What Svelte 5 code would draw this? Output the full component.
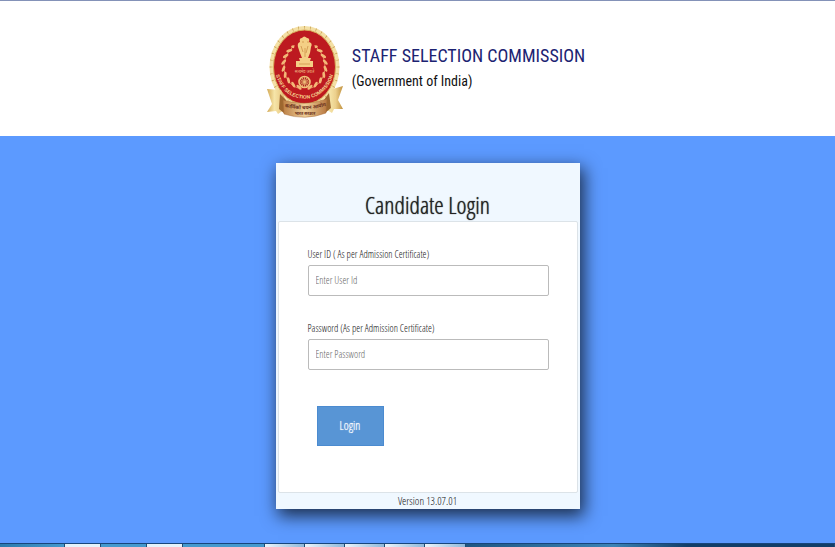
<script>
  let userId = $state('');
  let password = $state('');

  const leaves = Array.from({ length: 9 }, (_, i) => {
    const a = ((15 + i * 17) * Math.PI) / 180;
    return { x: 22 * Math.sin(a), y: 22 * Math.cos(a), r: 15 + i * 17 };
  });
  const rays = Array.from({ length: 36 }, (_, i) => i * 10);
  const spokes = Array.from({ length: 12 }, (_, i) => i * 30);
  const tabs = ['dim first', 'lit', 'dim', 'lit', 'dim wide', 'tab', 'tab', 'tab', 'tab', 'tab', 'dark'];
</script>

<div class="page">
  <header>
    <svg class="emblem" viewBox="0 0 78 94" role="img" aria-label="Staff Selection Commission emblem">
      <defs>
        <linearGradient id="gold" x1="0" x2="1" y1="0" y2="0">
          <stop offset="0" stop-color="#d3a955" />
          <stop offset=".35" stop-color="#f6e5a9" />
          <stop offset=".65" stop-color="#ecd08c" />
          <stop offset="1" stop-color="#c1913f" />
        </linearGradient>
        <linearGradient id="ribbon" x1="0" x2="1" y1="0" y2="0">
          <stop offset="0" stop-color="#bd8147" />
          <stop offset=".5" stop-color="#efd09a" />
          <stop offset="1" stop-color="#b87840" />
        </linearGradient>
        <path id="ring" d="M8 37C9 86 68 86 69 37" />
        <path id="motto" d="M19 82Q39 87 60 81" />
      </defs>
      <ellipse cx="38.5" cy="42" rx="35" ry="41" fill="#f4e0a5" />
      {#each rays as r}
        <path d="M38.5 1L39.5 1L39 6Z" fill="#c49a4b" transform={`translate(38.5 42) scale(.85 1) rotate(${r}) translate(-39 -42)`} />
      {/each}
      <ellipse cx="38.5" cy="42" rx="31" ry="37" fill="#bd1a20" stroke="#d9ae5c" stroke-width="1" />
      <g fill="none" stroke="#e8a36c" stroke-width=".8">
        <path d="M27 22C13 34 16 58 32 63M50 22C64 34 61 58 45 63" />
      </g>
      {#each leaves as l}
        <g fill="#f3b877">
          <ellipse cx={38.5 + l.x * 0.96} cy={41 + l.y} rx="3.2" ry="1.4" transform={`rotate(${-l.r - 30} ${38.5 + l.x * 0.96} ${41 + l.y})`} />
          <ellipse cx={38.5 - l.x * 0.96} cy={41 + l.y} rx="3.2" ry="1.4" transform={`rotate(${l.r + 30} ${38.5 - l.x * 0.96} ${41 + l.y})`} />
        </g>
      {/each}
      <ellipse cx="38.5" cy="28" rx="11" ry="17" fill="#bd1a20" />
      <g fill="#f4cf85">
        <path d="M34 17Q33 13 36 13Q38 10 41 13Q44 13 43 17Q47 18 45 22L44 28L42 33H36L34 28L32 22Q31 18 34 17Z" />
        <path d="M33 33H45L44 36H47V42H30V36H34Z" />
      </g>
      <path d="M36 17H38M41 17H43M35 21L37 27M42 21L40 28M39 23V32M33 39H44" stroke="#c98a44" stroke-width=".7" fill="none" />
      <text x="38.5" y="48" text-anchor="middle" class="tiny">सत्यमेव जयते</text>
      <circle cx="38.5" cy="57" r="5.5" fill="#a92720" stroke="#f1c37c" stroke-width="1.6" />
      {#each spokes as s}
        <path d="M38.5 57V52" stroke="#f1c37c" stroke-width=".7" transform={`rotate(${s} 38.5 57)`} />
      {/each}
      <text class="around"><textPath href="#ring" startOffset="50%" text-anchor="middle">STAFF SELECTION COMMISSION</textPath></text>
      <path d="M1 64L15 65L19 74L22 82L12 89L10 86L1 87L6 79Z" fill="url(#gold)" />
      <path d="M77 61L63 65L59 74L56 82L66 88L68 84L77 84L72 75Z" fill="url(#gold)" />
      <path d="M14 69L20 75L19 89L13 84ZM63 68L58 75L59 88L65 83Z" fill="#9d672f" />
      <path d="M17 75Q38 82 61 74L60 88Q39 96 18 89Z" fill="url(#ribbon)" stroke="#a96d36" stroke-width=".5" />
      <text class="motto"><textPath href="#motto" startOffset="50%" text-anchor="middle">कार्मिकों चयन आयोग</textPath></text>
      <text x="39" y="90" text-anchor="middle" class="motto small">भारत सरकार</text>
    </svg>
    <div class="names">
      <p class="org">STAFF SELECTION COMMISSION</p>
      <p class="gov">(Government of India)</p>
    </div>
  </header>

  <main>
    <section class="card">
      <h1>Candidate Login</h1>
      <form onsubmit={(e) => e.preventDefault()}>
        <label for="user">User ID ( As per Admission Certificate)</label>
        <input id="user" type="text" placeholder="Enter User Id" bind:value={userId} />
        <label for="pass">Password (As per Admission Certificate)</label>
        <input id="pass" type="password" placeholder="Enter Password" bind:value={password} />
        <button type="submit">Login</button>
      </form>
      <p class="version">Version 13.07.01</p>
    </section>
  </main>

  <div class="taskbar" aria-hidden="true">
    {#each tabs as t}<span class={t}></span>{/each}
  </div>
</div>

<style>
  :global(body) { margin: 0; }
  .page {
    min-height: 100vh;
    display: flex;
    flex-direction: column;
    background: #5c9aff;
    font-family: "Open Sans Condensed Light", "Open Sans Condensed", "Open Sans", sans-serif;
    font-weight: 300;
    color: #111;
  }
  p, h1 { margin: 0; font-weight: inherit; }
  header {
    box-sizing: border-box;
    height: 136px;
    padding-top: 24px;
    border-top: 1px solid #8492b8;
    background: #fff;
    display: flex;
    justify-content: center;
    align-items: flex-start;
    gap: 8px;
    padding-left: 16px;
  }
  .emblem { width: 78px; height: 94px; }
  .tiny { font: 4px "Noto Sans", sans-serif; fill: #efbf83; }
  .around { font: bold 5px "Liberation Sans", sans-serif; fill: #f7d894; }
  .motto { font: bold 5px "Noto Sans", sans-serif; fill: #6a301b; }
  .small { font-size: 4px; }
  .names { font-family: "Roboto Condensed", "Liberation Sans", sans-serif; font-weight: 400; padding-top: 18px; }
  .org { font-size: 18px; line-height: 26px; color: #1c2372; }
  .gov { font-size: 14px; line-height: 24px; color: #111; }
  main { flex: 1; display: flex; justify-content: center; align-items: flex-start; padding: 27px 16px 34px; }
  .card {
    box-sizing: border-box;
    width: 100%;
    max-width: 304px;
    margin-left: 20px;
    padding: 0 2px;
    background: #f0f8ff;
    box-shadow: 3px 6px 16px 1px rgba(0, 0, 0, 0.7);
  }
  h1 {
    padding-top: 25px;
    font-size: 24px;
    line-height: 33px;
    text-align: center;
    color: #222;
    text-shadow: 0 0 1px #222;
  }
  form {
    display: flex;
    flex-direction: column;
    padding: 24px 28px 46px 29px;
    border: 1px solid #dce3e8;
    border-radius: 2px;
    background: #fff;
  }
  label { font-size: 10px; line-height: 16px; margin-bottom: 3px; }
  input {
    box-sizing: border-box;
    width: 100%;
    height: 31px;
    margin-bottom: 24px;
    padding: 0 7px 1px;
    border: 1px solid #bbb;
    border-radius: 2px;
    background: #fff;
    font-family: inherit;
    font-weight: inherit;
    font-size: 10px;
    color: #333;
  }
  input::placeholder { color: #666; opacity: 1; }
  button {
    align-self: flex-start;
    width: 67px;
    height: 40px;
    margin: 12px 0 0 9px;
    padding: 0 0 1px;
    border: 1px solid #4b8bd0;
    background: #5895d5;
    font-family: inherit;
    font-weight: inherit;
    font-size: 12px;
    color: #fff;
    text-shadow: 0 0 1px #fff;
  }
  .version { font-size: 11px; line-height: 16px; text-align: center; }
  .taskbar { display: flex; height: 3px; border-top: 1px solid #17457c; background: #1c5180; }
  .taskbar span { flex: 40 1 0; box-sizing: border-box; border-right: 1px solid #214c72; }
  .taskbar .dim { flex-grow: 46; background: #4599cd; }
  .taskbar .first { flex-grow: 65; background: linear-gradient(90deg, #2b7aac, #4599cd); }
  .taskbar .wide { flex-grow: 82; }
  .taskbar .lit { flex-grow: 36; background: #e5f2fb; }
  .taskbar .tab { background: linear-gradient(90deg, #edf5fb, #8fb9da); }
  .taskbar .dark { flex-grow: 376; background: linear-gradient(90deg, #1f5682, #3b83b5 40%, #123e68 60%); }
</style>
